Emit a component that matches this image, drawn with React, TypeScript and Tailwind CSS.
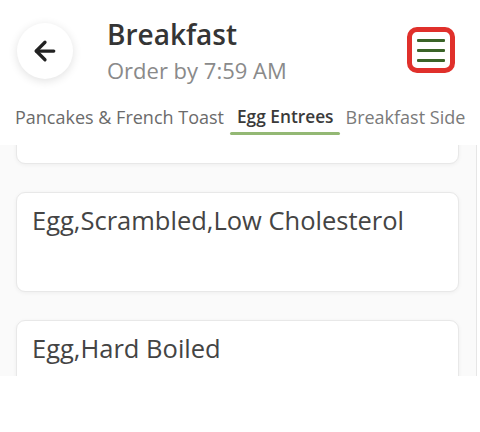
import { ArrowLeft } from "lucide-react";

const items = ["Egg,Scrambled,Low Cholesterol", "Egg,Hard Boiled"];

function MenuButton() {
  return (
    <button className="flex h-[46px] w-[48px] flex-col items-center justify-center gap-[7px] rounded-[10px] border-[5px] border-[#e0302b] bg-white">
      <span className="h-[3px] w-[28px] rounded-[1px] bg-[#3b6428]" />
      <span className="h-[3px] w-[28px] rounded-[1px] bg-[#3b6428]" />
      <span className="h-[3px] w-[28px] rounded-[1px] bg-[#3b6428]" />
    </button>
  );
}

export default function App() {
  return (
    <div className="h-[432px] w-[480px] overflow-hidden bg-white font-['Open_Sans',sans-serif]">
      <header className="flex h-[83px] items-start px-[17px] pt-[19px]">
        <button className="mt-[4px] flex h-[56px] w-[56px] items-center justify-center rounded-full bg-white shadow-[0_2px_10px_rgba(0,0,0,0.12)]">
          <ArrowLeft size={30} strokeWidth={2.6} className="text-[#222]" />
        </button>
        <div className="ml-[34px] flex-1">
          <div className="text-[28px] font-semibold leading-[30px] text-[#353535]">Breakfast</div>
          <div className="mt-[8px] text-[22px] leading-[26px] text-[#8a8a8a]">Order by 7:59 AM</div>
        </div>
        <div className="mr-[8px] mt-[8px]">
          <MenuButton />
        </div>
      </header>

      <nav className="mt-[21px] flex items-center whitespace-nowrap pl-[15px] leading-[26px]">
        <span className="text-[18px] text-[#6b6b6b]">Pancakes &amp; French Toast</span>
        <span className="relative ml-[13px] text-[17.3px] font-semibold text-[#3a3a3a]">
          Egg Entrees
          <span className="absolute -left-[7px] -right-[6px] top-[28px] h-[3px] rounded-full bg-[#93b874]" />
        </span>
        <span className="ml-[12px] text-[18px] text-[#7a7a7a]">Breakfast Side</span>
      </nav>

      <div className="mt-[15px] h-[231px] w-[477px] overflow-hidden border-r border-[#e6e6e6] bg-[#fafafa]">
        <div className="-mt-[81px] flex flex-col gap-[28px] pl-[16px] pr-[17px]">
          <div className="h-[100px] rounded-[9px] border border-[#e8e8e8] bg-white shadow-[0_1px_4px_rgba(0,0,0,0.05)]" />
          {items.map((name) => (
            <div
              key={name}
              className="h-[100px] rounded-[9px] border border-[#e8e8e8] bg-white px-[15px] pt-[10px] shadow-[0_1px_4px_rgba(0,0,0,0.05)]"
            >
              <div className="text-[25.5px] leading-[34px] text-[#444]">{name}</div>
            </div>
          ))}
        </div>
      </div>
    </div>
  );
}
